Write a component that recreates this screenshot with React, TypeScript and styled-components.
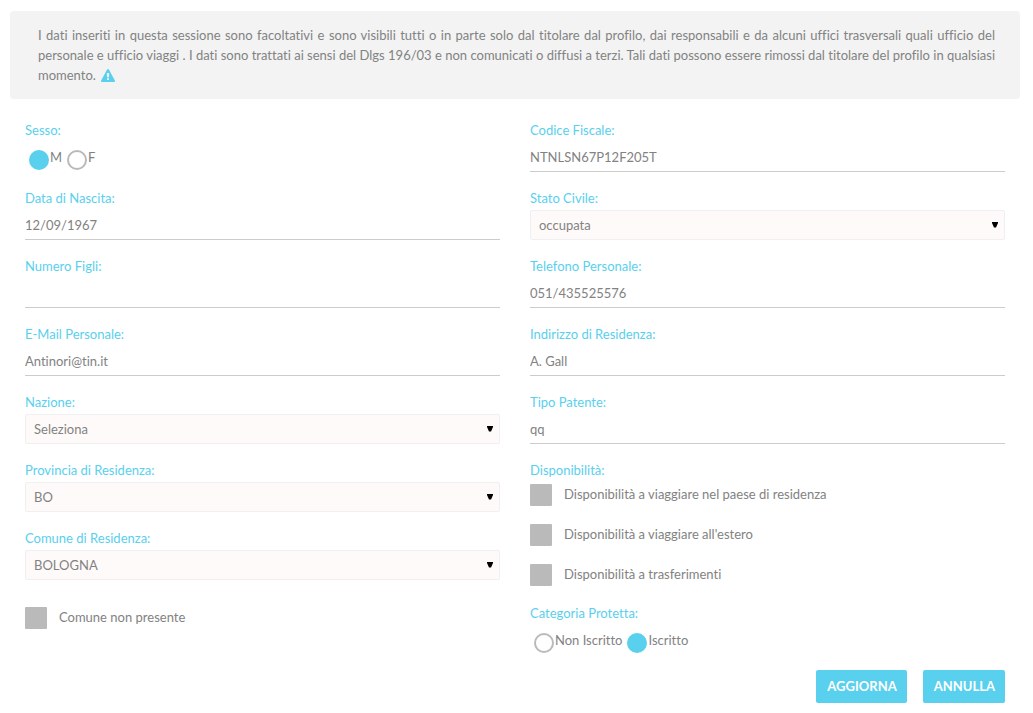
import React, { useId } from "react";
import styled, { createGlobalStyle } from "styled-components";

const accent = "#59d0ee";
const text = "#828282";

const GlobalStyle = createGlobalStyle`
  *, *::before, *::after { box-sizing: border-box; }
  body {
    margin: 0;
    background: #fff;
    color: ${text};
    font-family: Lato, "Liberation Sans", sans-serif;
    font-size: 13px;
    font-variant-ligatures: none;
    line-height: 20px;
  }
  input, select, button { font: inherit; font-variant-ligatures: none; color: inherit; margin: 0; }
`;

const Page = styled.main`
  padding: 11px 13px 10px 10px;
`;

const Notice = styled.p`
  margin: 0;
  padding: 14px 25px 14px 28px;
  border-radius: 4px;
  background: #f3f3f3;
  text-align: justify;
`;

const WarningIcon = styled.svg`
  width: 14px;
  height: 14px;
  margin-left: 2px;
  vertical-align: -2px;
`;

const Form = styled.form`
  padding: 21px 15px 0;
`;

const Columns = styled.div`
  display: grid;
  grid-template-columns: 1fr 1fr;
  column-gap: 30px;
`;

const Column = styled.div`
  display: flex;
  flex-direction: column;
  gap: 16px;
  min-width: 0;
`;

const FieldBox = styled.div`
  display: flex;
  flex-direction: column;
  gap: 2px;
`;

const Label = styled.label`
  color: ${accent};
`;

const TextInput = styled.input`
  width: 100%;
  height: 30px;
  padding: 0;
  border: 0;
  border-bottom: 1px solid #ccc;
  border-radius: 0;
  background: transparent;
  outline: none;
`;

const SelectWrap = styled.div`
  position: relative;
`;

const SelectInput = styled.select`
  display: block;
  width: 100%;
  height: 30px;
  padding: 0 24px 0 8px;
  border: 1px solid #f0f0f0;
  border-radius: 2px;
  background: #fffafa;
  appearance: none;
  outline: none;
`;

const Arrow = styled.svg`
  position: absolute;
  right: 7px;
  top: 12px;
  width: 6px;
  height: 6px;
  pointer-events: none;
`;

const Group = styled.fieldset`
  margin: 0;
  padding: 0;
  border: 0;
  min-width: 0;
`;

const Legend = styled.legend`
  padding: 0;
  color: ${accent};
`;

const RadioRow = styled.div`
  display: flex;
  gap: 5px;
  height: 32px;
  padding: 7px 0 0 4px;
`;

const RadioLabel = styled.label`
  display: flex;
  align-items: flex-start;
  gap: 1px;
`;

const Radio = styled.input`
  width: 20px;
  height: 20px;
  margin-top: 3px;
  border: 2px solid #bababa;
  border-radius: 50%;
  appearance: none;
  &:checked {
    border-color: ${accent};
    background: ${accent};
  }
`;

const CheckList = styled.div`
  display: flex;
  flex-direction: column;
  gap: 18px;
  padding: 4px 0 1px;
`;

const CheckLabel = styled.label`
  display: flex;
  align-items: flex-start;
  gap: 12px;
`;

const Checkbox = styled.input`
  width: 22px;
  height: 22px;
  border-radius: 1px;
  background: #bababa;
  appearance: none;
  &:checked { background: ${accent}; }
`;

const LoneCheck = styled.div`
  padding-top: 11px;
`;

const Actions = styled.div`
  display: flex;
  justify-content: flex-end;
  gap: 16px;
  margin-top: 15px;
`;

const Button = styled.button`
  height: 33px;
  padding: 0 10px 2px 11px;
  border: 0;
  border-radius: 2px;
  background: ${accent};
  color: #fff;
  font-weight: 700;
  text-transform: uppercase;
  cursor: pointer;
`;

function TextField({ label, value, type = "text" }: { label: string; value?: string; type?: string }) {
  const id = useId();
  return (
    <FieldBox>
      <Label htmlFor={id}>{label}</Label>
      <TextInput id={id} type={type} defaultValue={value} />
    </FieldBox>
  );
}

function SelectField({ label, value }: { label: string; value: string }) {
  const id = useId();
  return (
    <FieldBox>
      <Label htmlFor={id}>{label}</Label>
      <SelectWrap>
        <SelectInput id={id} defaultValue={value}>
          <option>{value}</option>
        </SelectInput>
        <Arrow viewBox="0 0 6 6" aria-hidden="true">
          <path d="M0 0h6v1L4 5.500H2L0 1z" fill="#000" />
        </Arrow>
      </SelectWrap>
    </FieldBox>
  );
}

function RadioGroup({ legend, name, options, value }: { legend: string; name: string; options: string[]; value: string }) {
  return (
    <Group>
      <Legend>{legend}</Legend>
      <RadioRow>
        {options.map((o) => (
          <RadioLabel key={o}>
            <Radio type="radio" name={name} value={o} defaultChecked={o === value} />
            {o}
          </RadioLabel>
        ))}
      </RadioRow>
    </Group>
  );
}

function Check({ label }: { label: string }) {
  return (
    <CheckLabel>
      <Checkbox type="checkbox" />
      {label}
    </CheckLabel>
  );
}

export default function App() {
  return (
    <>
      <GlobalStyle />
      <Page>
        <Notice>
          I dati inseriti in questa sessione sono facoltativi e sono visibili tutti o in parte solo dal titolare dal
          profilo, dai responsabili e da alcuni uffici trasversali quali ufficio del personale e ufficio viaggi . I dati
          sono trattati ai sensi del Dlgs 196/03 e non comunicati o diffusi a terzi. Tali dati possono essere rimossi
          dal titolare del profilo in qualsiasi momento.{" "}
          <WarningIcon viewBox="0 0 14 14" role="img" aria-label="Attenzione">
            <path
              fill={accent}
              fillRule="evenodd"
              d="M7 1c.4 0 .7.2.9.5l6 11c.3.7-.1 1.5-.9 1.5H1c-.8 0-1.200-.8-.9-1.500l6-11C6.300 1.200 6.600 1 7 1zM5.800 5l.2 4.200h2L8.200 5zM6 10.200V12h2v-1.800z"
            />
          </WarningIcon>
        </Notice>
        <Form onSubmit={(e) => e.preventDefault()}>
          <Columns>
            <Column>
              <RadioGroup legend="Sesso:" name="sesso" options={["M", "F"]} value="M" />
              <TextField label="Data di Nascita:" value="12/09/1967" />
              <TextField label="Numero Figli:" />
              <TextField label="E-Mail Personale:" value="Antinori@tin.it" type="email" />
              <SelectField label="Nazione:" value="Seleziona" />
              <SelectField label="Provincia di Residenza:" value="BO" />
              <SelectField label="Comune di Residenza:" value="BOLOGNA" />
              <LoneCheck>
                <Check label="Comune non presente" />
              </LoneCheck>
            </Column>
            <Column>
              <TextField label="Codice Fiscale:" value="NTNLSN67P12F205T" />
              <SelectField label="Stato Civile:" value="occupata" />
              <TextField label="Telefono Personale:" value="051/435525576" type="tel" />
              <TextField label="Indirizzo di Residenza:" value="A. Gall" />
              <TextField label="Tipo Patente:" value="qq" />
              <Group>
                <Legend>Disponibilità:</Legend>
                <CheckList>
                  <Check label="Disponibilità a viaggiare nel paese di residenza" />
                  <Check label="Disponibilità a viaggiare all'estero" />
                  <Check label="Disponibilità a trasferimenti" />
                </CheckList>
              </Group>
              <RadioGroup legend="Categoria Protetta:" name="categoria" options={["Non Iscritto", "Iscritto"]} value="Iscritto" />
            </Column>
          </Columns>
          <Actions>
            <Button type="submit">Aggiorna</Button>
            <Button type="button">Annulla</Button>
          </Actions>
        </Form>
      </Page>
    </>
  );
}
